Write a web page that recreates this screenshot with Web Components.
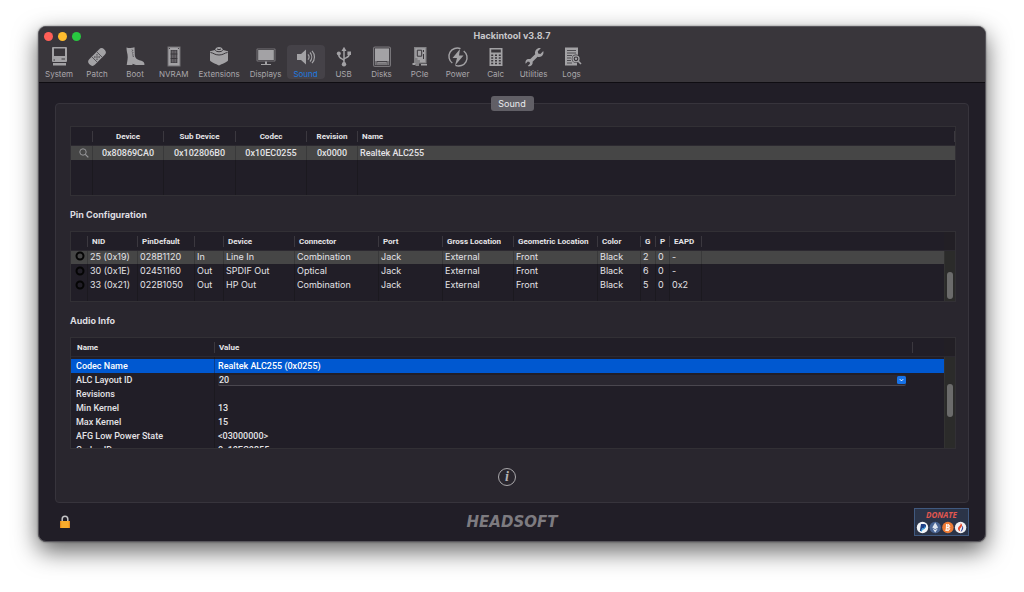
<!DOCTYPE html>
<html lang="en">
<head>
<meta charset="utf-8">
<title>Hackintool</title>
<style>
  body {
    margin: 0;
    min-height: 100vh;
    box-sizing: border-box;
    padding: 26px 38px 50px;
    display: flex;
    background: #fff;
    color: #e4e3e6;
    font: 9px/14px Inter, "Liberation Sans", sans-serif;
  }
  app-window { flex: 1; min-width: 0; }
</style>
</head>
<body>
<app-window heading="Hackintool v3.8.7">
  <tool-bar slot="toolbar">
    <tool-item icon="system">System</tool-item>
    <tool-item icon="patch">Patch</tool-item>
    <tool-item icon="boot">Boot</tool-item>
    <tool-item icon="nvram">NVRAM</tool-item>
    <tool-item icon="extensions">Extensions</tool-item>
    <tool-item icon="displays">Displays</tool-item>
    <tool-item icon="sound" selected>Sound</tool-item>
    <tool-item icon="usb">USB</tool-item>
    <tool-item icon="disks">Disks</tool-item>
    <tool-item icon="pcie">PCIe</tool-item>
    <tool-item icon="power">Power</tool-item>
    <tool-item icon="calc">Calc</tool-item>
    <tool-item icon="utilities">Utilities</tool-item>
    <tool-item icon="logs">Logs</tool-item>
  </tool-bar>
  <tab-box label="Sound">
    <data-grid source="codecs"></data-grid>
    <section-title>Pin Configuration</section-title>
    <data-grid source="pins"></data-grid>
    <section-title>Audio Info</section-title>
    <data-grid source="info"></data-grid>
    <info-button></info-button>
  </tab-box>
  <status-bar slot="footer"></status-bar>
</app-window>

<script>
const define = (name, html) => customElements.define(name, class extends HTMLElement {
  connectedCallback() {
    if (this.shadowRoot) return;
    this.attachShadow({ mode: 'open' }).innerHTML = typeof html === 'function' ? html(this) : html;
  }
});

/* Toolbar glyphs, 24 x 22 units; --hole is the colour behind them */
const ICONS = {
  system: `<rect x="5" y="1" width="15" height="15" rx="1"/><path d="M6 17h13v2.500H6z"/>
    <path class="h" d="M7 2.600h11v7.400H7zM14.500 12.500h3.500v1h-3.500zM6.500 13.400h1.500v1H6.500z"/>`,
  patch: `<g transform="rotate(-45 12 11)"><rect x="1.500" y="7" width="21" height="8" rx="3.800"/>
    <path class="hs" stroke-width=".7" d="M8.500 7.500v7M15.500 7.500v7"/>
    <g class="h"><circle cx="10.500" cy="9.500" r=".7"/><circle cx="13.500" cy="9.500" r=".7"/><circle cx="12" cy="11" r=".7"/><circle cx="10.500" cy="12.500" r=".7"/><circle cx="13.500" cy="12.500" r=".7"/></g></g>`,
  boot: `<path d="M3.500 1.400C6 2.400 9 2.200 11.500 1.300l.4 8.700c.7 2.300 2 3.500 4.500 4.300 3 .7 4.800 1.500 5 3.500v1.200h-8.500l-3.400-1.200v1.200H3.700c.4-3.500 1.500-7 .8-10.500C4 6 3.500 4 3.500 1.400z"/>
    <path class="hs" stroke-width=".7" d="M9 3.500l1 1.500M9 5.500l1.300 1.500M9 7.500l1.600 1.500M9.400 9.800l1.600.8"/>`,
  nvram: `<path d="M5.500.5h13v20h-13z" opacity=".55"/><path d="M6.500 1.500h11v18h-11z"/>
    <path class="h" d="M8.700 4h6.600v13H8.700z"/><path d="M9.700 4.500h1v12h-1zM11.500 4.500h1v12h-1zM13.300 4.500h1v12h-1z" opacity=".6"/>
    <path class="hs" stroke-width="1" d="M8.700 8h6.600M8.700 12.500h6.600"/>
    <circle class="h" cx="7.500" cy="2.500" r=".6"/><circle class="h" cx="16.500" cy="2.500" r=".6"/>`,
  extensions: `<path d="M3 5.300l5-1.300c.5-2 2-3 4-3s3.500 1 4 3l5 1.300v9c0 1.600-6.500 3.800-9 5.300-2.500-1.500-9-3.700-9-5.300z"/>
    <path class="hs" stroke-width="1" d="M3.500 6.500c3 .3 4 2.500 8.500 2.500s5.500-2.200 8.500-2.500M8.300 4.400c1 1.800 6.400 1.800 7.400 0M10 2.900c1 .9 3 .9 4 0"/>`,
  displays: `<rect x="2.500" y="2.500" width="19" height="13" rx="1" opacity=".6"/><path d="M4.200 4h15.600v10H4.200zM11 15.500h2V18h4v1H7v-1h4z"/>
    <rect class="hs" stroke-width=".6" x="3.800" y="3.700" width="16.400" height="10.600"/>`,
  sound: `<path d="M3 8h4l5-4.500v15L7 14H3z"/><path class="s" stroke-width="1.200" d="M14 8.300c1.300 1.600 1.300 3.800 0 5.400M16 6.500c2.300 2.600 2.300 6.400 0 9M18 4.800c3.300 3.600 3.300 8.800 0 12.400"/>`,
  usb: `<path class="s" stroke-width="1.500" d="M12 4v14M12 15c0-2.500-5.200-1.700-5.200-6M12 13.600c0-2.200 5.200-1.200 5.200-5.600"/>
    <path d="M12 .8l2.500 4.200h-5zM15.400 5.500h3.600v3.600h-3.600z"/><circle cx="6.800" cy="7.600" r="2"/><circle cx="12" cy="18.200" r="2.200"/>`,
  disks: `<rect x="3" y=".5" width="18" height="20.500" rx="2" opacity=".6"/><path d="M5 2h14v13H5zM6.500 16h11v3.500h-11z"/>
    <path class="hs" stroke-width=".8" d="M4.500 2h15v17.500h-15zM7 19.500v-4h10v4M9 16.500v3M11 16.500v3M13 16.500v3M15 16.500v3"/>`,
  pcie: `<path d="M6 1h12.500v16.500H11V20H7.500v-2H5.800v-1.500H6z" opacity=".7"/><path d="M7.300 2.200h10v14H12V14H9.500v-2H7.300zM4.500 17h3v2h-3zM13 18h6v1.500h-6z"/>
    <path class="hs" stroke-width="1" d="M9.300 4.200h4.400v6H9.300zM15.500 4v2M15.500 8v5"/>`,
  power: `<path class="s" stroke-width="1.400" d="M14.500 2.700A8.300 8.300 0 0 0 6.300 17M9.500 19.300A8.300 8.300 0 0 0 17.700 5"/>
    <path d="M14 3L6.500 12H11l-2 7.500L17.500 9.500H13z"/>`,
  calc: `<path d="M5.500 2h13v18h-13z"/><path class="h" d="M7.200 3.600h9.600v3H7.200z"/>
    <path class="h" d="M7.200 8.500h2v1.500h-2zM11 8.500h2v1.500h-2zM14.800 8.500h2v1.500h-2zM7.200 11.300h2v1.500h-2zM11 11.300h2v1.500h-2zM14.800 11.300h2v1.500h-2zM7.200 14h2v1.500h-2zM11 14h2v1.500h-2zM14.800 14h2v1.500h-2zM7.200 16.800h2v1.500h-2zM11 16.800h2v1.500h-2zM14.800 16.800h2v1.500h-2z"/>`,
  utilities: `<path d="M18.800 2.200l-3 3 .4 2.300 2.200.4 2.900-2.900c.6 2.300-.2 4.200-1.700 5.200-1.300.8-2.700.9-4 .5l-5 5c.4 1.700-.3 3.200-1.600 4-1.100.6-2.200.7-3.300.3l2.300-2.300-.4-1.800-1.800-.4-2.200 2.300c-.5-2 .2-3.700 1.600-4.500 1-.5 2.100-.5 3.100-.2l4.900-4.900c-.5-1.600-.2-3.200.9-4.500 1.200-1.400 2.900-1.900 4.700-1.500z"/>`,
  logs: `<path d="M5 1.500h13v11h-1v7H5z"/><path class="hs" stroke-width=".8" d="M7 4.500h9M7 7h9M7 9.500h5M7 12h4M7 14.500h4M7 17h5"/>
    <circle class="h" cx="16" cy="12.800" r="4.300"/><circle class="s" stroke-width="1.300" cx="16" cy="12.800" r="3"/><circle cx="16" cy="12.800" r="1.200"/><path class="s" stroke-width="1.600" d="M18.300 15.200l2.700 2.800"/>`
};

define('app-window', el => `
  <style>
    :host { display: flex; flex-direction: column; border: 1px solid #57555b; border-radius: 8px;
      background: #211e27; overflow: hidden;
      box-shadow: 0 9px 25px rgba(0,0,0,.62), 0 0 2px rgba(0,0,0,.5); }
    header { background: #39363b; border-bottom: 1px solid #0f0d12; padding-bottom: 3px; }
    .bar { display: grid; grid-template-columns: 1fr auto 1fr; align-items: center; height: 18px; padding: 0 5px; }
    .lights { display: flex; gap: 5px; }
    .lights button { width: 9px; height: 9px; padding: 0; border: 0; border-radius: 50%; }
    h1 { margin: 0; font-size: 9px; line-height: 14px; font-weight: 700; color: #c9c8cb; }
    main { flex: 1; }
  </style>
  <header>
    <div class="bar">
      <div class="lights">
        <button aria-label="Close" style="background:#ff5f57"></button>
        <button aria-label="Minimize" style="background:#febc2e"></button>
        <button aria-label="Zoom" style="background:#28c840"></button>
      </div>
      <h1>${el.getAttribute('heading')}</h1>
    </div>
    <slot name="toolbar"></slot>
  </header>
  <main><slot></slot></main>
  <slot name="footer"></slot>`);

define('tool-bar', `
  <style>:host { display: flex; padding: 0 1px; }</style>
  <slot></slot>`);

define('tool-item', el => `
  <style>
    :host { display: block; --hole: #39363b; }
    button { display: flex; flex-direction: column; align-items: center; gap: 2px; min-width: 38px; height: 34px;
      box-sizing: border-box; padding: 1px 5px 0; border: 0; border-radius: 4px; background: none;
      color: #a9a7ab; font: 8px/9px Inter, "Liberation Sans", sans-serif; }
    svg { width: 24px; height: 22px; flex: none; fill: #a3a2a5; }
    .h { fill: var(--hole); }
    .hs { fill: none; stroke: var(--hole); }
    .s { fill: none; stroke: #a3a2a5; }
    :host([selected]) { --hole: #454248; }
    :host([selected]) button { background: #454248; color: #1d7be0; }
  </style>
  <button><svg viewBox="0 0 24 22" aria-hidden="true">${ICONS[el.getAttribute('icon')]}</svg><slot></slot></button>`);

define('tab-box', el => `
  <style>
    :host { display: block; padding: 13px 16px 0; }
    nav { display: flex; justify-content: center; margin-bottom: -8px; position: relative; }
    button { height: 15px; width: 43px; padding: 0; border: 0; border-radius: 3px; background: #615f66;
      color: #ececee; font: 9px/15px Inter, "Liberation Sans", sans-serif; }
    section { border: 1px solid #37343c; border-radius: 4px; background: #29262e; padding: 22px 12px 16px 14px; }
  </style>
  <nav><button>${el.getAttribute('label')}</button></nav>
  <section><slot></slot></section>`);

define('section-title', `
  <style>
    :host { display: block; }
    h2 { margin: 0; padding-top: 3px; font-size: 9px; line-height: 32px; font-weight: 700; color: #dedde0; }
  </style>
  <h2><slot></slot></h2>`);

const lens = `<button class="lens" aria-label="Inspect"><svg width="10" height="10" viewBox="0 0 10 10" fill="none" stroke="#97979a"><circle cx="4" cy="4" r="3.200"/><path d="M6.300 6.300l3 3" stroke-width="1.200"/></svg></button>`;
const jack = `<svg width="10" height="10" viewBox="0 0 10 10" role="img" aria-label="Black jack"><circle cx="5" cy="5" r="3.500" fill="none" stroke="#050505" stroke-width="2"/></svg>`;
const layout = `<span class="combo"><select aria-label="ALC Layout ID"><option>20</option></select><svg width="9" height="8" viewBox="0 0 9 8" aria-hidden="true"><rect width="9" height="8" rx="1.500" fill="#1672e8"/><path d="M2.800 3.200l1.700 1.700 1.700-1.700" fill="none" stroke="#fff"/></svg></span>`;

/* cols: [title, width in px or 0 for the remaining space] */
const SOURCES = {
  codecs: {
    height: 70, kind: 'codecs',
    cols: [['', 22], ['Device', 71], ['Sub Device', 72], ['Codec', 71], ['Revision', 51], ['Name', 0]],
    rows: [[lens, '0x80869CA0', '0x102806B0', '0x10EC0255', '0x0000', 'Realtek ALC255']]
  },
  pins: {
    height: 71, kind: 'pins', thumb: [21, 27],
    cols: [['', 17], ['NID', 50], ['PinDefault', 57], ['', 29], ['Device', 71], ['Connector', 84], ['Port', 64],
      ['Gross Location', 71], ['Geometric Location', 84], ['Color', 43], ['G', 15], ['P', 14], ['EAPD', 32], ['', 0]],
    rows: [
      [jack, '25 (0x19)', '028B1120', 'In', 'Line In', 'Combination', 'Jack', 'External', 'Front', 'Black', '2', '0', '-', ''],
      [jack, '30 (0x1E)', '02451160', 'Out', 'SPDIF Out', 'Optical', 'Jack', 'External', 'Front', 'Black', '6', '0', '-', ''],
      [jack, '33 (0x21)', '022B1050', 'Out', 'HP Out', 'Combination', 'Jack', 'External', 'Front', 'Black', '5', '0', '0x2', '']
    ]
  },
  info: {
    height: 112, kind: 'info', thumb: [27, 33],
    cols: [['Name', 144], ['Value', 0], ['', 31]],
    rows: [
      ['Codec Name', 'Realtek ALC255 (0x0255)', ''],
      ['ALC Layout ID', layout, ''],
      ['Revisions', '', ''],
      ['Min Kernel', '13', ''],
      ['Max Kernel', '15', ''],
      ['AFG Low Power State', '&lt;03000000&gt;', ''],
      ['Codec ID', '0x10EC0255', '']
    ]
  }
};

define('data-grid', el => {
  const s = SOURCES[el.getAttribute('source')];
  return `
  <style>
    :host { display: block; }
    .view { display: flex; box-sizing: border-box; overflow: hidden; border: 1px solid #323035; background: #211e27; }
    .body { flex: 1; min-width: 0; }
    table { width: 100%; height: 100%; table-layout: fixed; border-collapse: separate; border-spacing: 0; }
    th, td { box-sizing: border-box; padding: 0; text-align: left; white-space: nowrap; }
    th { height: 19px; font: 700 8px/11px Roboto, "Liberation Sans", sans-serif; color: #e6e5e8; border-bottom: 1px solid #2c2930; }
    th span { display: block; height: 11px; padding-left: 4px; border-right: 1px solid #3b383f; }
    td { height: 14px; line-height: 14px; padding-left: 2px; border-right: 1px solid #1b191f; }
    td:last-child { border-right: 0; }
    tr.fill td { height: auto; line-height: 0; }
    tr.sel td { background: #464646; border-right-color: #39393a; }
    .bar { width: 11px; flex: none; box-sizing: border-box; border-left: 1px solid #323231; background: #2b2b2a; }
    .bar i { display: block; height: 19px; margin-left: -1px; background: #221f25; border-bottom: 1px solid #2c2930; box-sizing: border-box; }
    .bar b { display: block; width: 6px; margin: 0 auto; border-radius: 3px; background: #6b6b6b; }
    svg { display: block; }
    button { padding: 0; border: 0; background: none; }

    .codecs td, .info td { font: 500 9px/14px Roboto, "Liberation Sans", sans-serif; }
    .codecs th:not(:last-child), .codecs td:not(:last-child) { text-align: center; }
    .codecs th:not(:last-child) span, .codecs td:not(:last-child) { padding-left: 0; }
    .codecs .lens { display: block; margin-left: 8px; }

    .pins tr.sel td { height: 13px; line-height: 12px; vertical-align: top; }
    .pins td svg { margin-left: 2px; }
    .pins th:last-child span { border: 0; }

    .info th span { padding-left: 6px; }
    .info th:nth-child(2) span { padding-left: 4px; }
    .info th:last-child span { border: 0; }
    .info td { padding-left: 5px; }
    .info td + td { padding-left: 3px; }
    .info td:nth-child(2) { border-right: 0; }
    .info tr.gap td { height: 2px; line-height: 0; }
    .info tr.sel td { background: #0058d0; border-right-color: #0a3f8c; color: #fff; }
    .combo { display: block; position: relative; margin-right: 7px; }
    select { display: block; width: 100%; height: 11px; appearance: none; border: 0; border-bottom: 1px solid #4a474f;
      border-radius: 2px; background: #2a2730; color: inherit; font: 500 9px/10px Roboto, "Liberation Sans", sans-serif; padding: 0 1px; }
    .combo svg { position: absolute; right: 0; top: 1px; pointer-events: none; }
  </style>
  <div class="view ${s.kind}" style="height:${s.height}px">
    <div class="body"><table>
      <colgroup>${s.cols.map(c => `<col${c[1] ? ` style="width:${c[1]}px"` : ''}>`).join('')}</colgroup>
      <thead><tr>${s.cols.map(c => `<th><span>${c[0]}</span></th>`).join('')}</tr></thead>
      <tbody>
        ${s.kind === 'info' ? '<tr class="gap"><td></td><td></td><td></td></tr>' : ''}
        ${s.rows.map((r, i) => `<tr${i ? '' : ' class="sel"'}>${r.map(v => `<td>${v}</td>`).join('')}</tr>`).join('')}
        ${s.kind === 'info' ? '' : `<tr class="fill">${s.cols.map(() => '<td></td>').join('')}</tr>`}
      </tbody>
    </table></div>
    ${s.thumb ? `<div class="bar"><i></i><b style="margin-top:${s.thumb[0]}px;height:${s.thumb[1]}px"></b></div>` : ''}
  </div>`;
});

define('info-button', `
  <style>
    :host { display: flex; justify-content: center; padding: 19px 12px 0 0; }
    button { width: 18px; height: 18px; padding: 0; border: 1px solid #a9a8ab; border-radius: 50%; background: none;
      color: #b4b3b6; font: italic bold 14px/16px "Liberation Serif", serif; }
  </style>
  <button aria-label="Info">i</button>`);

define('status-bar', `
  <style>
    :host { display: grid; grid-template-columns: 1fr auto 1fr; align-items: center; height: 38px; padding: 0 16px; }
    button { padding: 0; border: 0; background: none; display: block; }
    svg { display: block; }
    .lock { margin-left: 4px; }
    .logo { color: #7d7b80; font: italic bold 15px/16px "DejaVu Sans", sans-serif; text-decoration: none; }
    .donate { justify-self: end; box-sizing: border-box; width: 55px; height: 28px; border: 1px solid #40597f; background: #2b3448;
      color: #e2574f; font: italic bold 8px/10px "Open Sans", sans-serif; }
    .donate svg { margin: 1px auto 0; }
  </style>
  <button class="lock" aria-label="Unlock"><svg width="12" height="14" viewBox="0 0 12 14"><path d="M3.200 7V4a2.800 2.800 0 0 1 5.600 0v3" fill="none" stroke="#c4c4c6" stroke-width="1.500"/><rect x="1" y="6" width="10" height="7" rx=".6" fill="#f9ab2c"/><path d="M1 6h1.200v7H1zM9.800 6H11v7H9.800z" fill="#e58a1d"/></svg></button>
  <a class="logo" href="#">HEADSOFT</a>
  <button class="donate">DONATE<svg width="51" height="13" viewBox="0 0 51 13" aria-hidden="true">
    <circle cx="6.500" cy="6.500" r="5.700" fill="#f3f5f7"/><path d="M5 3h3.200c3 .3 2.300 4.300-.7 4.500H6L5.500 10H3.800z" fill="#1f3f86"/><path d="M8.500 4.500c2 1.500.2 4.300-2 4.200L6 10.500H4.800L6 7.500c2 .2 3-1.300 2.500-3z" fill="#2a97d8"/>
    <circle cx="19.200" cy="6.500" r="5.700" fill="#4a6594"/><path d="M19.200 1.500l2.900 5-2.900 1.700-2.900-1.700zM16.500 7.500l2.700 1.600 2.700-1.600-2.700 4z" fill="#dfe5ef"/>
    <circle cx="31.900" cy="6.500" r="5.700" fill="#ec7a34"/><path d="M30.500 3.200l-.3 6.600M32.300 3l-.3 7.200M30 4h2.600c1.800.2 1.500 2.300-.2 2.400h-2 2c2 .2 1.600 2.800-.4 2.800h-2.600" fill="none" stroke="#fff" stroke-width="1"/>
    <circle cx="44.600" cy="6.500" r="5.700" fill="#f0f0f2"/><path d="M44.500 2c2 1 2 3 .5 4.500s-1.500 2.500-.5 4c-3-1-3-3.500-1.500-5S45 3.500 44.500 2z" fill="#e4482d"/><path d="M46.300 4.500c1.700 2 1 4.500-1.500 6.500.2-2 1.800-3.500 1.500-6.500z" fill="#31429a"/>
  </svg></button>`);
</script>
</body>
</html>
